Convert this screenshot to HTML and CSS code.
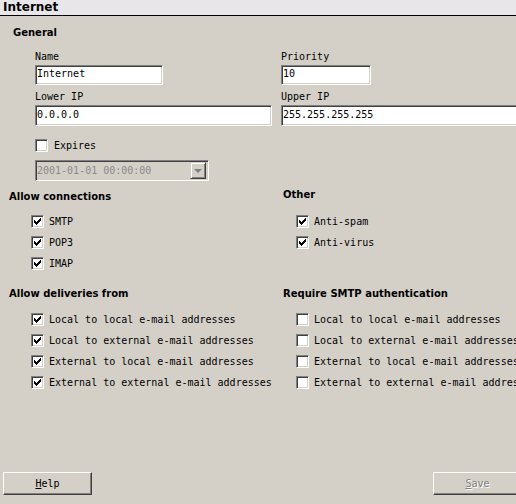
FILE: index.html
```html
<!DOCTYPE html>
<html>
<head>
<meta charset="utf-8">
<link rel="stylesheet" href="styles.css">
</head>
<body>
<svg class="defs" width="0" height="0">
  <defs>
    <symbol id="chk" viewBox="0 0 7 7"><path d="M0 2h1v3H0zM1 3h1v3H1zM2 4h1v3H2zM3 3h1v3H3zM4 2h1v3H4zM5 1h1v3H5zM6 0h1v3H6z" fill="#000"/></symbol>
  </defs>
</svg>
<div class="titlebar">Internet</div>
<div class="page">
  <section class="general">
    <h2 class="heading">General</h2>
    <div class="fields">
      <div class="field"><span class="lbl">Name</span><div class="textbox w-name">Internet</div></div>
      <div class="field"><span class="lbl">Priority</span><div class="textbox w-prio">10</div></div>
      <div class="field"><span class="lbl">Lower IP</span><div class="textbox w-ip">0.0.0.0</div></div>
      <div class="field"><span class="lbl">Upper IP</span><div class="textbox w-ip">255.255.255.255</div></div>
    </div>
    <div class="check-row expires"><span class="cb"></span><span class="txt">Expires</span></div>
    <div class="combo"><span class="combo-text">2001-01-01 00:00:00</span><span class="combo-btn"><span class="arrow"></span></span></div>
  </section>
  <div class="cols">
    <section class="group">
      <h2 class="heading">Allow connections</h2>
      <div class="list list-left">
        <div class="check-row"><span class="cb"><svg width="7" height="7"><use href="#chk"/></svg></span><span class="txt">SMTP</span></div>
        <div class="check-row"><span class="cb"><svg width="7" height="7"><use href="#chk"/></svg></span><span class="txt">POP3</span></div>
        <div class="check-row"><span class="cb"><svg width="7" height="7"><use href="#chk"/></svg></span><span class="txt">IMAP</span></div>
      </div>
    </section>
    <section class="group group-other">
      <h2 class="heading">Other</h2>
      <div class="list list-right">
        <div class="check-row"><span class="cb"><svg width="7" height="7"><use href="#chk"/></svg></span><span class="txt">Anti-spam</span></div>
        <div class="check-row"><span class="cb"><svg width="7" height="7"><use href="#chk"/></svg></span><span class="txt">Anti-virus</span></div>
      </div>
    </section>
    <section class="group group-second">
      <h2 class="heading">Allow deliveries from</h2>
      <div class="list list-left">
        <div class="check-row"><span class="cb"><svg width="7" height="7"><use href="#chk"/></svg></span><span class="txt">Local to local e-mail addresses</span></div>
        <div class="check-row"><span class="cb"><svg width="7" height="7"><use href="#chk"/></svg></span><span class="txt">Local to external e-mail addresses</span></div>
        <div class="check-row"><span class="cb"><svg width="7" height="7"><use href="#chk"/></svg></span><span class="txt">External to local e-mail addresses</span></div>
        <div class="check-row"><span class="cb"><svg width="7" height="7"><use href="#chk"/></svg></span><span class="txt">External to external e-mail addresses</span></div>
      </div>
    </section>
    <section class="group group-second">
      <h2 class="heading">Require SMTP authentication</h2>
      <div class="list list-right">
        <div class="check-row"><span class="cb"></span><span class="txt">Local to local e-mail addresses</span></div>
        <div class="check-row"><span class="cb"></span><span class="txt">Local to external e-mail addresses</span></div>
        <div class="check-row"><span class="cb"></span><span class="txt">External to local e-mail addresses</span></div>
        <div class="check-row"><span class="cb"></span><span class="txt">External to external e-mail addresses</span></div>
      </div>
    </section>
  </div>
</div>
<div class="footer">
  <button class="btn"><u>H</u>elp</button>
  <button class="btn btn-disabled" disabled><u>S</u>ave</button>
</div>
</body>
</html>
```

FILE: styles.css
```css
html, body {
  margin: 0;
  padding: 0;
}
body {
  width: 516px;
  height: 504px;
  overflow: hidden;
  background: #d4d0c8;
  display: flex;
  flex-direction: column;
  font-family: "DejaVu Sans Mono", monospace;
  font-size: 10px;
  color: #000;
}
.defs {
  position: absolute;
  width: 0;
  height: 0;
}
.titlebar {
  height: 15px;
  line-height: 15px;
  border-bottom: 1px solid #000;
  background: #e9e6e9;
  padding-left: 3px;
  font-family: "DejaVu Sans", sans-serif;
  font-weight: bold;
  font-size: 12px;
  flex: none;
}
.page {
  padding: 10px 0 0 9px;
  flex: none;
}
.heading {
  margin: 0;
  font-family: "DejaVu Sans", sans-serif;
  font-weight: bold;
  font-size: 10px;
  line-height: 14px;
  white-space: nowrap;
}
.general {
  padding-left: 4px;
}
.fields {
  display: grid;
  grid-template-columns: 246px 1fr;
  row-gap: 6px;
  margin: 11px 0 0 22px;
}
.field {
  display: flex;
  flex-direction: column;
  align-items: flex-start;
  gap: 2px;
}
.lbl {
  line-height: 12px;
  white-space: nowrap;
}
.textbox {
  box-sizing: border-box;
  height: 20px;
  line-height: 16px;
  padding: 0 1px;
  background: #fff;
  border: 1px solid;
  border-color: #808080 #fff #fff #808080;
  box-shadow: inset 1px 1px #404040, inset -1px -1px #d4d0c8;
  white-space: nowrap;
  overflow: hidden;
}
.w-name { width: 128px; }
.w-prio { width: 90px; }
.w-ip { width: 237px; height: 21px; line-height: 17px; }
.check-row {
  display: flex;
  align-items: center;
  gap: 5px;
  height: 21px;
  white-space: nowrap;
}
.cb {
  box-sizing: border-box;
  width: 13px;
  height: 13px;
  flex: none;
  display: flex;
  align-items: center;
  justify-content: center;
  background: #fff;
  border: 1px solid;
  border-color: #808080 #fff #fff #808080;
  box-shadow: inset 1px 1px #404040, inset -1px -1px #d4d0c8;
}
.cb svg {
  display: block;
}
.expires {
  margin: 9px 0 0 22px;
  gap: 6px;
}
.combo {
  box-sizing: border-box;
  width: 174px;
  height: 21px;
  margin: 4px 0 0 22px;
  display: flex;
  align-items: center;
  justify-content: space-between;
  padding: 0 2px 0 1px;
  background: #d4d0c8;
  border: 1px solid;
  border-color: #808080 #fff #fff #808080;
  box-shadow: inset 1px 1px #404040, inset -1px -1px #d4d0c8;
}
.combo-text {
  color: #8a8a8a;
}
.combo-btn {
  box-sizing: border-box;
  width: 16px;
  height: 17px;
  display: flex;
  align-items: center;
  justify-content: center;
  background: #d4d0c8;
  border: 1px solid;
  border-color: #d4d0c8 #404040 #404040 #d4d0c8;
  box-shadow: inset 1px 1px #fff, inset -1px -1px #808080;
}
.arrow {
  width: 0;
  height: 0;
  border-left: 4px solid transparent;
  border-right: 4px solid transparent;
  border-top: 4px solid #808080;
  margin-top: 1px;
}
.cols {
  display: grid;
  grid-template-columns: 274px 1fr;
  margin-top: 9px;
}
.list-left {
  margin-top: 7px;
  padding-left: 22px;
}
.list-right {
  margin-top: 9px;
  padding-left: 13px;
}
.group-other .heading {
  margin-top: -2px;
}
.group-second {
  margin-top: 13px;
}
.group-second .list-left {
  margin-top: 8px;
}
.group-second .list-right {
  margin-top: 8px;
}
.footer {
  margin-top: auto;
  flex: none;
  box-sizing: border-box;
  width: 522px;
  padding: 0 0 9px 3px;
  display: flex;
  justify-content: space-between;
}
.btn {
  box-sizing: border-box;
  width: 89px;
  height: 23px;
  padding: 0;
  background: #d4d0c8;
  border: 1px solid;
  border-color: #fff #404040 #404040 #fff;
  box-shadow: inset -1px -1px #808080;
  font-family: "DejaVu Sans Mono", monospace;
  font-size: 10px;
  color: #000;
}
.btn-disabled {
  color: #808080;
  text-shadow: 1px 1px #fff;
}
```
